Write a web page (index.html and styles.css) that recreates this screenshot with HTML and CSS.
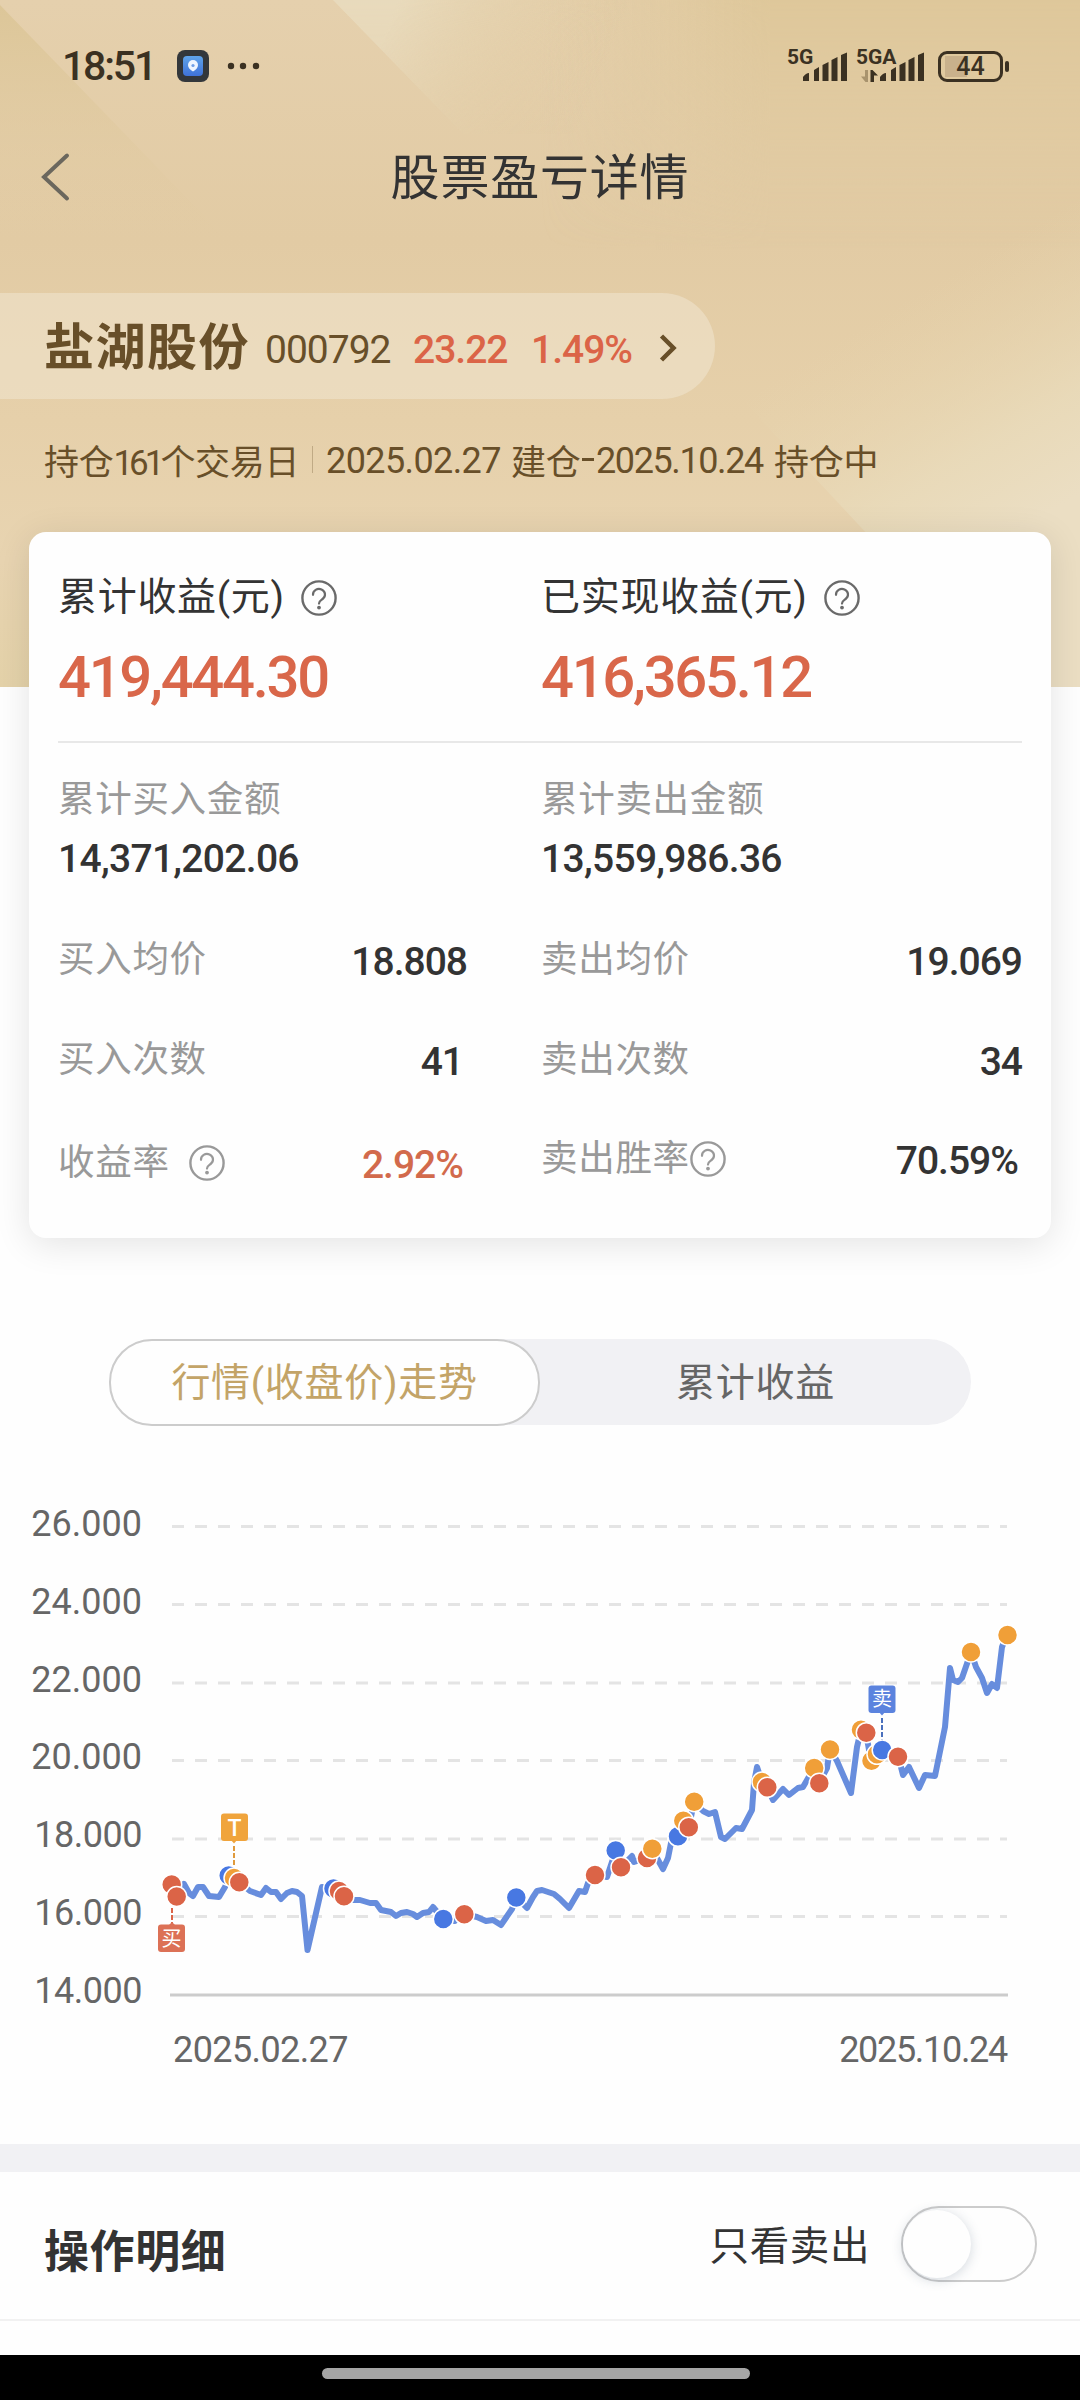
FILE: index.html
```html
<!DOCTYPE html>
<html lang="zh-CN">
<head>
  <meta charset="UTF-8">
  <title>股票盈亏详情</title>
  <link rel="stylesheet" href="styles.css">
</head>
<body>
  <!-- shared icons -->
  <svg class="defs" width="0" height="0">
    <symbol id="help" viewBox="0 0 36 36">
      <circle cx="18" cy="18" r="16.6" fill="none" stroke="currentColor" stroke-width="2.4"/>
      <path d="M12 14.800a6 5.600 0 1 1 9.600 4.200c-2.200 1.600-3.600 2.200-3.600 4.600" fill="none" stroke="currentColor" stroke-width="2.2" stroke-linecap="round"/>
      <circle cx="18" cy="27.600" r="1.900" fill="currentColor"/>
    </symbol>
    <symbol id="signal" viewBox="0 0 46 30">
      <path d="M1 29v-4q3-4 6-4v8zM12 29V18l5-3v14zM20.500 29V13l6-3v19zM29.500 29V8l6-3v24zM39 29V3l6-2.500V29z" fill="#3b3122"/>
    </symbol>
  </svg>

  <div class="hero">
    <svg class="hero-bg" viewBox="0 0 1080 687" width="1080" height="687">
      <defs>
        <linearGradient id="g1" gradientUnits="userSpaceOnUse" x1="0" y1="0" x2="0" y2="250">
          <stop offset="0" stop-color="#dcc698"/>
          <stop offset="1" stop-color="#e2cba3" stop-opacity="0"/>
        </linearGradient>
        <linearGradient id="g2" gradientUnits="userSpaceOnUse" x1="390" y1="20" x2="590" y2="100">
          <stop offset="0" stop-color="#e8dabc"/>
          <stop offset="1" stop-color="#e0c99d" stop-opacity="0"/>
        </linearGradient>
        <linearGradient id="g3" gradientUnits="userSpaceOnUse" x1="540" y1="0" x2="1000" y2="0">
          <stop offset="0" stop-color="#dec79a" stop-opacity="0"/>
          <stop offset=".5" stop-color="#dec79a"/>
          <stop offset="1" stop-color="#dec79a"/>
        </linearGradient>
        <linearGradient id="g4" gradientUnits="userSpaceOnUse" x1="745" y1="395" x2="875" y2="615">
          <stop offset="0" stop-color="#e6d4ad" stop-opacity="0"/>
          <stop offset=".65" stop-color="#e9dbbb" stop-opacity=".85"/>
          <stop offset="1" stop-color="#ebdec3"/>
        </linearGradient>
        <linearGradient id="fade" x1="0" y1="0" x2="0" y2="1">
          <stop offset="0" stop-color="#fff"/>
          <stop offset="1" stop-color="#000"/>
        </linearGradient>
        <mask id="m"><rect width="1080" height="250" fill="url(#fade)"/></mask>
      </defs>
      <rect x="540" width="540" height="250" fill="url(#g3)" mask="url(#m)"/>
      <path d="M0 5L245 258H0z" fill="url(#g1)"/>
      <path d="M333 0L463 134L640 134V0z" fill="url(#g2)" mask="url(#m)"/>
      <path d="M745 403L1080 150V687H1010z" fill="url(#g4)"/>
    </svg>

    <div class="status">
      <span class="clock">18:51</span>
      <svg class="app" width="32" height="32" viewBox="0 0 32 32">
        <defs>
          <linearGradient id="appg" x1="0" y1="0" x2="0" y2="1">
            <stop offset="0" stop-color="#5fa4ea"/>
            <stop offset="1" stop-color="#3f72d8"/>
          </linearGradient>
        </defs>
        <rect width="32" height="32" rx="8" fill="#33373b"/>
        <rect x="6" y="6" width="20" height="20" rx="4" fill="url(#appg)"/>
        <path d="M16 21.500q-5-3-5-6.500a5 5 0 0 1 10 0q0 3.500-5 6.500z" fill="#eef6ff"/>
        <circle cx="16" cy="15.500" r="1.600" fill="#6f9fe6"/>
      </svg>
      <svg class="dots" width="34" height="8" viewBox="0 0 34 8">
        <g fill="#3b3122"><circle cx="4" cy="4" r="3.200"/><circle cx="16" cy="4" r="3.200"/><circle cx="29" cy="4" r="3.200"/></g>
      </svg>
      <div class="status-right">
        <div class="net net-5g"><span>5G</span><svg width="46" height="30"><use href="#signal"/></svg></div>
        <div class="net net-5ga">
          <span>5GA</span>
          <svg class="arrows" width="17" height="12" viewBox="0 0 17 12">
            <path d="M7 0v12h-2.500L0 6.500h4V0z" fill="#a8936d"/>
            <path d="M9.500 12V0h2L17 5.500h-4V12z" fill="#3b3122"/>
          </svg>
          <svg width="46" height="30"><use href="#signal"/></svg>
        </div>
        <div class="battery"><span>44</span></div>
      </div>
    </div>

    <div class="navbar">
      <svg class="back" width="30" height="50" viewBox="0 0 30 50">
        <path d="M26 3.500L3 25L26 46.500" fill="none" stroke="#6b675d" stroke-width="4" stroke-linecap="round"/>
      </svg>
      <h1>股票盈亏详情</h1>
    </div>

    <div class="stock">
      <span class="name">盐湖股份</span>
      <span class="code">000792</span>
      <span class="price">23.22</span>
      <span class="change">1.49%</span>
      <svg class="arrow" width="18" height="32" viewBox="0 0 18 32">
        <path d="M2.500 4L14.500 16L2.500 28" fill="none" stroke="#684f29" stroke-width="4.500"/>
      </svg>
    </div>

    <div class="period">
      <span class="days">持仓<span class="num">161</span>个交易日</span>
      <i class="bar"></i>
      <span class="date">2025.02.27</span>
      <span class="cn">建仓</span>
      <i class="dash"></i>
      <span class="date date-end">2025.10.24</span>
      <span class="cn hold">持仓中</span>
    </div>
  </div>

  <div class="card">
    <div class="totals">
      <div>
        <div class="total-title"><span>累计收益(元)</span><svg class="help"><use href="#help"/></svg></div>
        <div class="total-value">419,444.30</div>
      </div>
      <div>
        <div class="total-title"><span>已实现收益(元)</span><svg class="help"><use href="#help"/></svg></div>
        <div class="total-value">416,365.12</div>
      </div>
    </div>
    <div class="amounts">
      <div>
        <div class="label">累计买入金额</div>
        <div class="value">14,371,202.06</div>
      </div>
      <div>
        <div class="label">累计卖出金额</div>
        <div class="value">13,559,986.36</div>
      </div>
    </div>
    <div class="stats">
      <div class="stat"><span class="label">买入均价</span><span class="value">18.808</span></div>
      <div class="stat"><span class="label">卖出均价</span><span class="value">19.069</span></div>
      <div class="stat"><span class="label">买入次数</span><span class="value in">41</span></div>
      <div class="stat"><span class="label">卖出次数</span><span class="value">34</span></div>
      <div class="stat low"><span class="label">收益率<svg class="help gap"><use href="#help"/></svg></span><span class="value red in">2.92%</span></div>
      <div class="stat high"><span class="label">卖出胜率<svg class="help"><use href="#help"/></svg></span><span class="value in">70.59%</span></div>
    </div>
  </div>

  <div class="tabs">
    <div class="tab active">行情(收盘价)走势</div>
    <div class="tab">累计收益</div>
  </div>

  <svg class="chart" width="1080" height="580" viewBox="0 0 1080 580">
    <g class="grid">
      <path d="M172 26.500H1007"/>
      <path d="M172 104.500H1007"/>
      <path d="M172 183H1007"/>
      <path d="M172 260.500H1007"/>
      <path d="M172 339H1007"/>
      <path d="M172 416.500H1007"/>
    </g>
    <path class="axis" d="M170 495H1008"/>
    <g class="ylabels">
      <text x="142" y="36">26.000</text>
      <text x="142" y="114">24.000</text>
      <text x="142" y="191.500">22.000</text>
      <text x="142" y="269">20.000</text>
      <text class="narrow" x="142" y="347">18.000</text>
      <text class="narrow" x="142" y="425">16.000</text>
      <text class="narrow" x="142" y="502.500">14.000</text>
    </g>
    <g class="xlabels">
      <text x="173" y="562">2025.02.27</text>
      <text class="end" x="1007" y="562">2025.10.24</text>
    </g>

    <polyline class="line" points="172,384 177,397 184,384 189,393 193,396 198,387 203,387 209,396 219,397 225,387 229,376 234,378 239,382 250,391 261,395 266,388 271,392 276,392 281,399 287,393 292,391 297,392 302,396 307.500,450 322,387 333,389 339,391 344,396 353,400 360,400 370,403 376,403 381,410 391,412 396,416 401,413 407,412 413,414 417,417 423,413 429,412 433,407 443,419 455,421 464,414 477,417 486,421 493,420 501,425 512,409 516,397 527,408 533,397 537,391 542,390 554,394 560,399 569,408 579,391 585,392 588,383 595,375 607,377 616,350 621,367 632,356 634,362 647,358 652,349 663,369 668,358 671,343 678,337 683,321 689,327 694,302 703,311 709,314 715,312 721,337 725,339 736,328 742,329 752,310 754,283 757,267 762,282 767,287 773,300 783,289 789,295 798,288 803,287 814,268 819,283 827,268 830,249 837,261 851,293 857,247 861,230 866,233 871,261 877,254 882,250 898,257 901,267 903,275 909,267 919,288 925,275 935,276 945,227 950,168 953,180 958,182 962,178 971,152 976,167 982,178 987,193 992,184 997,188 1002,147 1007,135"/>

    <!-- marker stems -->
    <path class="stem buy" d="M172 408V424"/>
    <path class="stem t" d="M234 346V369"/>
    <path class="stem sell" d="M882 218V242"/>

    <g class="points">
      <circle class="buy" cx="171.700" cy="384.500" r="10"/>
      <circle class="buy" cx="176.700" cy="396.500" r="10"/>
      <circle class="sell" cx="228.700" cy="375.500" r="10"/>
      <circle class="t" cx="234" cy="378" r="10"/>
      <circle class="buy" cx="239.300" cy="382.300" r="10"/>
      <circle class="sell" cx="333.500" cy="388.500" r="10"/>
      <circle class="buy" cx="339" cy="391" r="10"/>
      <circle class="buy" cx="344" cy="396.300" r="10"/>
      <circle class="sell" cx="443.300" cy="419" r="10"/>
      <circle class="buy" cx="464.300" cy="414.300" r="10"/>
      <circle class="sell" cx="516.300" cy="397.500" r="10"/>
      <circle class="buy" cx="595" cy="375" r="10"/>
      <circle class="sell" cx="615.700" cy="350.500" r="10"/>
      <circle class="buy" cx="621" cy="367.300" r="10"/>
      <circle class="buy" cx="647" cy="358" r="10"/>
      <circle class="t" cx="652.300" cy="348.700" r="10"/>
      <circle class="sell" cx="678" cy="336.300" r="10"/>
      <circle class="t" cx="683.300" cy="320.700" r="10"/>
      <circle class="buy" cx="688.800" cy="327.200" r="10"/>
      <circle class="t" cx="694.200" cy="301.700" r="10"/>
      <circle class="t" cx="762" cy="282" r="10"/>
      <circle class="buy" cx="767.300" cy="287.300" r="10"/>
      <circle class="t" cx="814.200" cy="268" r="10"/>
      <circle class="buy" cx="819.300" cy="283.300" r="10"/>
      <circle class="t" cx="830" cy="249.500" r="10"/>
      <circle class="t" cx="861" cy="229.700" r="10"/>
      <circle class="buy" cx="866.300" cy="232.700" r="10"/>
      <circle class="t" cx="871.500" cy="260.700" r="10"/>
      <circle class="t" cx="877" cy="254.300" r="10"/>
      <circle class="sell" cx="882.200" cy="250" r="10"/>
      <circle class="buy" cx="898" cy="256.700" r="10"/>
      <circle class="t" cx="971" cy="152" r="10"/>
      <circle class="t" cx="1007.500" cy="135" r="10"/>
    </g>

    <g class="flags">
      <path d="M169 425l3-3l3 3z" fill="#dc7156"/>
      <rect x="158" y="424.500" width="27" height="27.500" rx="3" fill="#dc7156"/>
      <text x="171.500" y="446">买</text>
      <path d="M231 340l3 3.500l3-3.500z" fill="#f0a43c"/>
      <rect x="221" y="313.500" width="27" height="27.500" rx="3" fill="#f0a43c"/>
      <text class="latin" x="234.500" y="335.500">T</text>
      <path d="M879 212l3 3.500l3-3.500z" fill="#5b83de"/>
      <rect x="868.500" y="185.500" width="27" height="27.500" rx="3" fill="#5b83de"/>
      <text x="882" y="206">卖</text>
    </g>
  </svg>

  <div class="spacer"></div>

  <div class="detail">
    <h2>操作明细</h2>
    <span class="only">只看卖出</span>
    <div class="switch"><i class="knob"></i></div>
  </div>

  <div class="home"><i></i></div>
</body>
</html>
```
FILE: styles.css
```css
* {
  box-sizing: border-box;
}
body {
  margin: 0;
  width: 1080px;
  height: 2400px;
  overflow: hidden;
  display: flex;
  flex-direction: column;
  background: #fefefe;
  color: #333;
  font-family: Roboto, "Noto Sans CJK SC", sans-serif;
}
svg {
  display: block;
  flex: none;
}
span {
  white-space: nowrap;
}
h1, h2 {
  margin: 0;
}
.defs {
  position: absolute;
}

/* header */
.hero {
  position: relative;
  flex: none;
  height: 687px;
  background: linear-gradient(#e5d0ad 0, #e2cba4 240px, #e6d0aa 420px, #e8d4b1 560px, #e4d2a9 687px);
}
.hero-bg {
  position: absolute;
  left: 0;
  top: 0;
}
.status, .navbar, .stock, .period {
  position: relative;
  display: flex;
  align-items: center;
}
.status {
  height: 132px;
  padding-left: 62px;
  color: #3b3122;
}
.clock {
  width: 115px;
  font-size: 41px;
  font-weight: 500;
  letter-spacing: -2.2px;
}
.dots {
  margin-left: 18px;
}
.status-right {
  display: flex;
  align-items: center;
  margin-left: auto;
  padding-right: 77px;
}
.net {
  display: flex;
  align-items: flex-end;
  height: 32px;
}
.net span {
  align-self: flex-start;
  font-size: 21px;
  font-weight: 700;
  line-height: 24px;
  margin-top: -5px;
}
.net-5g {
  width: 69px;
}
.net-5g span {
  width: 15px;
}
.net-5ga {
  width: 82px;
}
.net-5ga span {
  width: 3px;
}
.arrows {
  margin: 0 1px 0 2px;
}
.battery {
  position: relative;
  width: 65px;
  height: 31px;
  border: 3px solid #3b3122;
  border-radius: 9px;
  background: linear-gradient(#c9b18c, #c9b18c) 4px 2px / 22px 21px no-repeat;
  text-align: center;
  line-height: 26px;
  font-size: 25px;
  font-weight: 500;
}
.battery::after {
  content: "";
  position: absolute;
  right: -9px;
  top: 7px;
  width: 4px;
  height: 11px;
  border-radius: 2px;
  background: #3b3122;
}
.navbar {
  height: 90px;
  justify-content: center;
}
.back {
  position: absolute;
  left: 41px;
  top: 20px;
}
h1 {
  margin-top: 4px;
  font-size: 49px;
  font-weight: 400;
  line-height: 60px;
  letter-spacing: .8px;
}
.stock {
  margin-top: 71px;
  width: 715px;
  height: 106px;
  padding: 3px 0 0 44px;
  border-radius: 0 53px 53px 0;
  background: rgba(241, 232, 211, .5);
  color: #684f29;
  font-size: 39px;
  line-height: 60px;
}
.stock .name {
  width: 221px;
  font-size: 50px;
  font-weight: 700;
  letter-spacing: 1.5px;
}
.stock .code {
  width: 148px;
  margin-top: 5px;
  letter-spacing: -1px;
}
.stock .price, .stock .change {
  margin-top: 5px;
  color: #db6447;
  font-weight: 500;
}
.stock .price {
  width: 118px;
  letter-spacing: -1px;
}
.stock .change {
  width: 128px;
  letter-spacing: -1px;
}
.period {
  height: 120px;
  padding-left: 44px;
  color: #684f29;
  font-size: 35px;
}
.days {
  width: 268px;
  letter-spacing: -.3px;
}
.num {
  letter-spacing: -4px;
}
.bar {
  width: 1px;
  height: 27px;
  margin-right: 13px;
  background: #c0aa85;
}
.date {
  width: 185px;
  margin-top: 3px;
  font-size: 36px;
  letter-spacing: -.6px;
}
.cn {
  width: 71px;
  letter-spacing: -.3px;
}
.dash {
  width: 12px;
  height: 3px;
  background: #684f29;
}
.date-end {
  width: 178px;
  margin-left: 2px;
  letter-spacing: -1.4px;
}

/* summary card */
.card {
  position: relative;
  flex: none;
  width: 1022px;
  height: 706px;
  margin: -155px 29px 0;
  padding: 35px 29px 0;
  border-radius: 17px;
  background: #fefefe;
  box-shadow: 0 6px 36px rgba(0, 0, 0, .11);
}
.totals, .amounts, .stats {
  display: grid;
  grid-template-columns: 483px 1fr;
}
.totals {
  height: 176px;
  border-bottom: 2px solid #e8e8e8;
}
.total-title {
  display: flex;
  align-items: center;
  height: 56px;
  font-size: 39px;
  letter-spacing: .7px;
}
.total-title span {
  margin-top: -5px;
}
.help {
  width: 36px;
  height: 36px;
  color: #6a6a6a;
}
.total-title .help {
  margin: 6px 0 0 16px;
}
.total-value {
  margin-top: 24px;
  height: 60px;
  line-height: 60px;
  font-size: 58px;
  font-weight: 500;
  letter-spacing: -2.3px;
  color: #d9674a;
}
.amounts {
  padding-top: 32px;
  height: 167px;
}
.label {
  display: flex;
  align-items: center;
  line-height: 50px;
  font-size: 36.500px;
  letter-spacing: .7px;
  color: #999;
}
.label .help {
  color: #999;
}
.value {
  font-size: 39px;
  font-weight: 500;
  letter-spacing: -1px;
}
.amounts .value {
  margin-top: 9px;
  line-height: 50px;
  letter-spacing: -.7px;
}
.stats {
  grid-auto-rows: 100px;
}
.stat {
  display: flex;
  justify-content: space-between;
  align-items: center;
  height: 100px;
}
.stat:nth-child(odd) {
  width: 409px;
}
.stat .value {
  padding-top: 4px;
}
.stat .in {
  padding-right: 4px;
}
.stat.low {
  padding-top: 5px;
}
.stat.high {
  padding-bottom: 3px;
}
.help.gap {
  margin-left: 19px;
}
.red {
  color: #d26a4c;
}

/* tabs */
.tabs {
  display: grid;
  grid-template-columns: 1fr 1fr;
  flex: none;
  width: 862px;
  height: 86px;
  margin: 101px 109px 75px;
  border-radius: 43px;
  background: #f1f1f4;
}
.tab {
  padding-top: 1px;
  text-align: center;
  line-height: 86px;
  font-size: 39px;
  letter-spacing: .7px;
  color: #666;
}
.tab.active {
  border: 2px solid #ccc;
  border-radius: 43px;
  line-height: 82px;
  background: #fefefe;
  color: #c3a468;
}

/* chart */
.grid path {
  stroke: #e4e4e4;
  stroke-width: 3;
  stroke-dasharray: 12 11;
}
.axis {
  stroke: #ccc;
  stroke-width: 3;
}
.ylabels text, .xlabels text {
  font-size: 36px;
  fill: #666;
}
.ylabels text, .xlabels .end {
  text-anchor: end;
}
.ylabels .narrow {
  letter-spacing: -.5px;
}
.xlabels text {
  letter-spacing: -.6px;
}
.xlabels .end {
  letter-spacing: -1.300px;
}
.line {
  fill: none;
  stroke: #678ddd;
  stroke-width: 6;
  stroke-linejoin: round;
}
.points circle {
  stroke: #fff;
  stroke-width: 1.500;
}
.points .buy {
  fill: #db6447;
}
.points .sell {
  fill: #4878e2;
}
.points .t {
  fill: #f09f38;
}
.stem {
  stroke-width: 2;
  stroke-dasharray: 5 2;
}
.stem.buy {
  stroke: #db6447;
}
.stem.t {
  stroke: #e09a3c;
}
.stem.sell {
  stroke: #4a70bd;
}
.flags text {
  fill: #fff;
  font-size: 20px;
  text-anchor: middle;
}
.flags .latin {
  font-size: 23px;
  font-weight: 500;
}

/* detail list */
.spacer {
  flex: none;
  height: 28px;
  margin-top: 64px;
  background: #f1f1f4;
}
.detail {
  display: flex;
  align-items: center;
  flex: none;
  height: 149px;
  padding: 0 43px 3px 44px;
  border-bottom: 2px solid #f1f1f1;
}
h2 {
  margin-top: 17px;
  font-size: 45px;
  line-height: 60px;
  letter-spacing: .6px;
}
.only {
  margin: 6px 31px 0 auto;
  font-size: 39.500px;
  line-height: 60px;
  letter-spacing: .6px;
}
.switch {
  width: 136px;
  height: 76px;
  border: 2px solid #ccc;
  border-radius: 38px;
  padding: 2px 0 0 0;
}
.knob {
  display: block;
  width: 68px;
  height: 68px;
  border-radius: 50%;
  background: #fefefe;
  box-shadow: 0 2px 12px rgba(60, 80, 110, .22);
}

/* system gesture bar */
.home {
  flex: none;
  height: 45px;
  margin-top: auto;
  padding: 13px 0 0 322px;
  background: #000;
}
.home i {
  display: block;
  width: 428px;
  height: 11px;
  border-radius: 6px;
  background: #a5a5a5;
}
```
